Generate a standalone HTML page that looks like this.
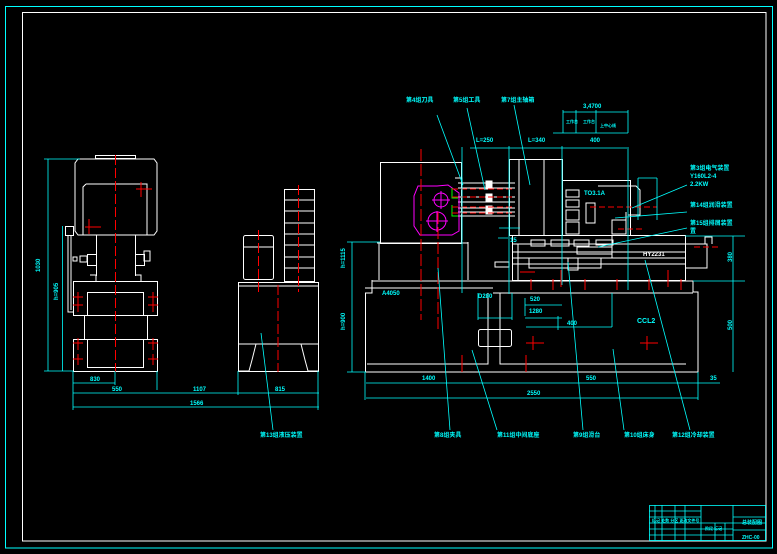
<!DOCTYPE html>
<html><head><meta charset="utf-8"><style>
html,body{margin:0;padding:0;background:#000;}
svg{display:block}
text{font-family:"Liberation Sans","Noto Sans CJK SC",sans-serif;font-size:6px;fill:#00ffff;font-weight:bold}
</style></head><body>
<svg width="777" height="554" viewBox="0 0 777 554" xmlns="http://www.w3.org/2000/svg">
<rect width="777" height="554" fill="#000"/>
<rect x="5.5" y="6.5" width="767" height="541.5" fill="none" stroke="#00ffff" stroke-width="1"/>
<rect x="22.5" y="12.5" width="743.5" height="528.5" fill="none" stroke="#fff" stroke-width="1"/>

<!-- title block -->
<g fill="none" stroke="#00ffff" stroke-width="0.8">
<rect x="649.5" y="505.5" width="116" height="35"/>
<line x1="649" y1="511" x2="701" y2="511"/><line x1="649" y1="517" x2="701" y2="517"/>
<line x1="649" y1="523" x2="766" y2="523"/><line x1="649" y1="529" x2="733" y2="529"/><line x1="649" y1="535" x2="733" y2="535"/>
<line x1="655" y1="505" x2="655" y2="541"/><line x1="662" y1="505" x2="662" y2="541"/><line x1="675" y1="505" x2="675" y2="541"/><line x1="685" y1="505" x2="685" y2="541"/><line x1="701" y1="505" x2="701" y2="541"/>
<line x1="733" y1="505" x2="733" y2="541"/><line x1="733" y1="517" x2="766" y2="517"/><line x1="733" y1="530" x2="766" y2="530"/>
<line x1="715" y1="523" x2="715" y2="541"/><line x1="725" y1="523" x2="725" y2="541"/>
</g>
<text x="652" y="522" style="font-size:4px">标记 处数 分区 更改文件号</text>
<text x="705" y="530" style="font-size:4px">阶段 标记</text>
<text x="742" y="524" style="font-size:5px">总装配图</text>
<text x="742" y="539" style="font-size:5px">ZHC-00</text>

<!-- LEFT FRONT VIEW -->
<g fill="none" stroke="#fff" stroke-width="1">
<rect x="95.5" y="155.5" width="40" height="3"/>
<path d="M78 159 H154 L157 163 V231 L154 235 H78 L75 231 V163 Z"/>
<path d="M86 184 H147 V235 M83 235 V187 L86 184"/>
<path d="M96.5 235 V276 M135.5 235 V276"/>
<rect x="65.5" y="226.5" width="8" height="9"/>
<path d="M68 236 V312 H73 M71 236 V310"/>
<rect x="87.5" y="254.5" width="9" height="11"/><rect x="80" y="256" width="7" height="6"/><rect x="73" y="257" width="4" height="4"/>
<rect x="135.5" y="254.5" width="9" height="11"/><rect x="144" y="251" width="6" height="10"/>
<path d="M90 275 H96 V281 M135 275 H141 V281"/>
<rect x="73.5" y="281.5" width="84" height="34"/>
<rect x="87.5" y="292.5" width="56" height="23"/>
<rect x="84.5" y="315.5" width="63" height="24"/>
<rect x="73.5" y="339.5" width="84" height="32"/>
<rect x="87.5" y="339.5" width="56" height="28"/>
<!-- tank unit -->
<rect x="243.5" y="235.5" width="30" height="44" rx="2"/>
<line x1="243" y1="247" x2="273" y2="247"/>
<rect x="284.5" y="189.5" width="30" height="92"/>
<path d="M284 200 H314 M284 211 H314 M284 223 H314 M284 234 H314 M284 245 H314 M284 257 H314 M284 268 H314"/>
<rect x="238.5" y="282.5" width="80" height="89"/>
<line x1="238" y1="286" x2="318" y2="286"/>
<line x1="238" y1="344" x2="318" y2="344"/>
<path d="M238 371 H249 L252 360 L256 344 M318 371 H308 L305 360 L301 344"/>
</g>
<g stroke="#ff0000" stroke-width="1" fill="none">
<line x1="115.5" y1="155" x2="115.5" y2="372" stroke-dasharray="10 3"/>
<line x1="258.5" y1="230" x2="258.5" y2="292" stroke-dasharray="10 3"/>
<line x1="298.5" y1="185" x2="298.5" y2="292" stroke-dasharray="10 3"/>
<line x1="278" y1="285" x2="278" y2="372" stroke-dasharray="10 3"/>
<path d="M136 189 H152 M141 182 V197 M85 227 H101 M89 219 V234"/>
<path d="M73 297 H83 M78 292 V312 M73 305 H83 M148 297 H158 M153 292 V312 M148 305 H158"/>
<path d="M73 343 H83 M78 338 V350 M73 359 H83 M78 354 V365 M148 343 H158 M153 338 V350 M148 359 H158 M153 354 V365"/>
</g>
<g stroke="#00ffff" stroke-width="0.8" fill="none">
<path d="M48 159 V371 M44 159 H80 M62.5 226 V371 M44 371 H73"/>
<path d="M73 371 V410 M115 371 V385 M157 371 V390 M238 371 V395 M318 371 V410"/>
<path d="M73 383 H115 M73 393 H319 M73 407 H319"/>
<path d="M261 333 L273 430"/>
</g>
<text x="40" y="272" transform="rotate(-90 40 272)">1030</text>
<text x="58" y="300" transform="rotate(-90 58 300)">h=905</text>
<text x="90" y="381">830</text><text x="112" y="391">550</text><text x="193" y="391">1107</text><text x="275" y="391">815</text><text x="190" y="405">1566</text>
<text x="260" y="437">第13组液压装置</text>

<!-- RIGHT MAIN VIEW -->
<g fill="none" stroke="#fff" stroke-width="1">
<rect x="380.5" y="162.5" width="81" height="81"/>
<path d="M379 243 V280 M468 242 V280 M377 243 H468"/>
<path d="M372 280 V293 H365.5 V372 H698 V292 H693 V281 H372"/>
<path d="M367 364 H488 V352 M500 352 V364 H686"/>
<path d="M500 294 V352 M488 293 V352"/>
<rect x="478.5" y="329.5" width="33" height="17" rx="2"/>
<line x1="493" y1="293" x2="693" y2="293"/>
<line x1="365" y1="288" x2="493" y2="288"/>
<line x1="500" y1="293" x2="500" y2="300"/>
<rect x="509.5" y="159.5" width="53" height="76"/>
<path d="M519 159 V235 M544 159 V235"/>
<rect x="562.5" y="180.5" width="68" height="55"/>
<rect x="566" y="190" width="13" height="7"/><rect x="566" y="200" width="13" height="7"/><rect x="566" y="210" width="13" height="10"/><rect x="566" y="222" width="13" height="12"/>
<rect x="586" y="203" width="9" height="20"/>
<path d="M598 186 H636 L640 190 V215 H628 M626 212 V234"/>
<rect x="612" y="220" width="14" height="14"/>
<rect x="512.5" y="235.5" width="173" height="45"/>
<path d="M512 244 H685 M512 252 H685 M512 258 H685 M512 264 H685 M518 244 V280 M612 235 V258"/>
<rect x="531" y="240" width="14" height="6"/><rect x="551" y="240" width="18" height="6"/><rect x="574" y="240" width="15" height="6"/><rect x="596" y="240" width="17" height="5"/>
<rect x="577" y="247" width="35" height="7"/>
<rect x="529" y="258" width="72" height="10"/>
<rect x="568" y="258" width="10" height="12"/>
<path d="M685 244 H707 V268 H685 M705 244 V237 H712 V244"/>
<rect x="495" y="262" width="14" height="5"/>
<path d="M458 183 H515 M458 188 H515 M458 197 H515 M458 202 H515 M458 208 H515 M458 212 H515 M458 216 H515"/>
<rect x="486" y="181" width="6" height="8" fill="#fff"/><rect x="486" y="194" width="6" height="8" fill="#fff"/><rect x="486" y="206" width="6" height="8" fill="#fff"/>
<path d="M455 178 H462 V240"/>
</g>
<g fill="none" stroke="#ff00ff" stroke-width="1">
<path d="M418 186 H437 L448 185 L459 193 V231 L452 235 H420 L414 226 V196 Z"/>
<circle cx="441" cy="200" r="7"/><circle cx="437" cy="221" r="9"/>
<path d="M432 200 H450 M441 191 V209 M426 221 H448 M437 211 V232"/>
</g>
<g fill="none" stroke="#00ff00" stroke-width="1"><path d="M452 188 V198 H458 M452 205 V216 H458"/></g>
<g stroke="#ff0000" stroke-width="1" fill="none">
<line x1="421" y1="149" x2="421" y2="320" stroke-dasharray="12 3"/>
<line x1="438" y1="212" x2="438" y2="330" stroke-dasharray="12 3"/>
<path d="M452 189 H515 M452 197 H515 M452 207 H515 M452 213 H515" stroke-dasharray="6 3"/>
<path d="M590 207 H657 M618 229 H643 M694 247 H718" stroke-dasharray="6 3"/>
<path d="M520 272 H535 M531 279 V290 M561 270 V287 M553 279 V290 M585 279 V290 M617 279 V290 M649 279 V290 M681 279 V290 M668 270 V287"/>
<path d="M526 343 H544 M533 336 V350 M640 343 H658 M647 336 V350 M462 355 V372 M526 355 V372"/>
</g>
<g fill="none" stroke="#00ffff" stroke-width="0.8">
<path d="M352 242 V372 M347 242 H380 M352 281 V280 M347 372 H366"/>
<path d="M365 372 V400 M366 383 H720 M366 398 H698 M698 372 V400"/>
<path d="M733 236 V372 M685 236 H745 M693 281 H745"/>
<path d="M462 147 V293 M470 148 H627 M509 146 V294 M562 146 V285 M628 147 V290 M563 133 H628 M553 133 H628 M576 110 V133 M563 110 V133 M596 110 V133 M628 110 V133 M563 112 H628"/>
<path d="M478 293 V320 M478 318 H512 M512 293 V320 M525 298 V316 M525 305 H562 M558 316 V330 M525 318 H562 M526 327 H612 M612 293 V327"/>
<path d="M437 115 L463 185 M467 108 L485 190 M514 105 L530 185"/>
<path d="M638 178 V220 M638 178 H657 M657 178 V220"/>
<path d="M687 185 L632 208 M687 212 L615 218 M687 228 L598 247"/>
<path d="M438 268 L450 430 M472 350 L497 430 M568 262 L583 430 M613 349 L624 430 M645 260 L690 430"/>
<path d="M499 228 H520 M498 238 H508"/>
</g>
<text x="406" y="102">第4组刀具</text><text x="453" y="102">第5组工具</text><text x="501" y="102">第7组主轴箱</text>
<text x="583" y="108">3,4700</text><text x="566" y="123" style="font-size:4px">工作台</text><text x="583" y="123" style="font-size:4px">工作台</text><text x="600" y="127" style="font-size:4px">上中心线</text>
<text x="476" y="142">L=250</text><text x="528" y="142">L=340</text><text x="590" y="142">400</text>
<text x="690" y="170">第3组电气装置</text><text x="690" y="178">Y160L2-4</text><text x="690" y="186">2.2KW</text>
<text x="690" y="207">第14组润滑装置</text><text x="690" y="225">第15组排屑装置</text><text x="690" y="233">置</text>
<text x="584" y="195">TO3.1A</text>
<text x="643" y="256" style="fill:#fff">HY2231</text>
<text x="637" y="323" style="font-size:7px">CCL2</text>
<text x="382" y="295">A4050</text><text x="478" y="298">D280</text>
<text x="510" y="242">15</text>
<text x="345" y="268" transform="rotate(-90 345 268)">h=1115</text>
<text x="345" y="330" transform="rotate(-90 345 330)">h=900</text>
<text x="732" y="262" transform="rotate(-90 732 262)">380</text>
<text x="732" y="330" transform="rotate(-90 732 330)">500</text>
<text x="422" y="380">1400</text><text x="586" y="380">550</text><text x="710" y="380">35</text><text x="527" y="395">2550</text>
<text x="529" y="313">1280</text><text x="567" y="325">400</text><text x="530" y="301">520</text>
<text x="434" y="437">第8组夹具</text><text x="497" y="437">第11组中间底座</text><text x="573" y="437">第9组滑台</text><text x="624" y="437">第10组床身</text><text x="672" y="437">第12组冷却装置</text>
</svg>
</body></html>
